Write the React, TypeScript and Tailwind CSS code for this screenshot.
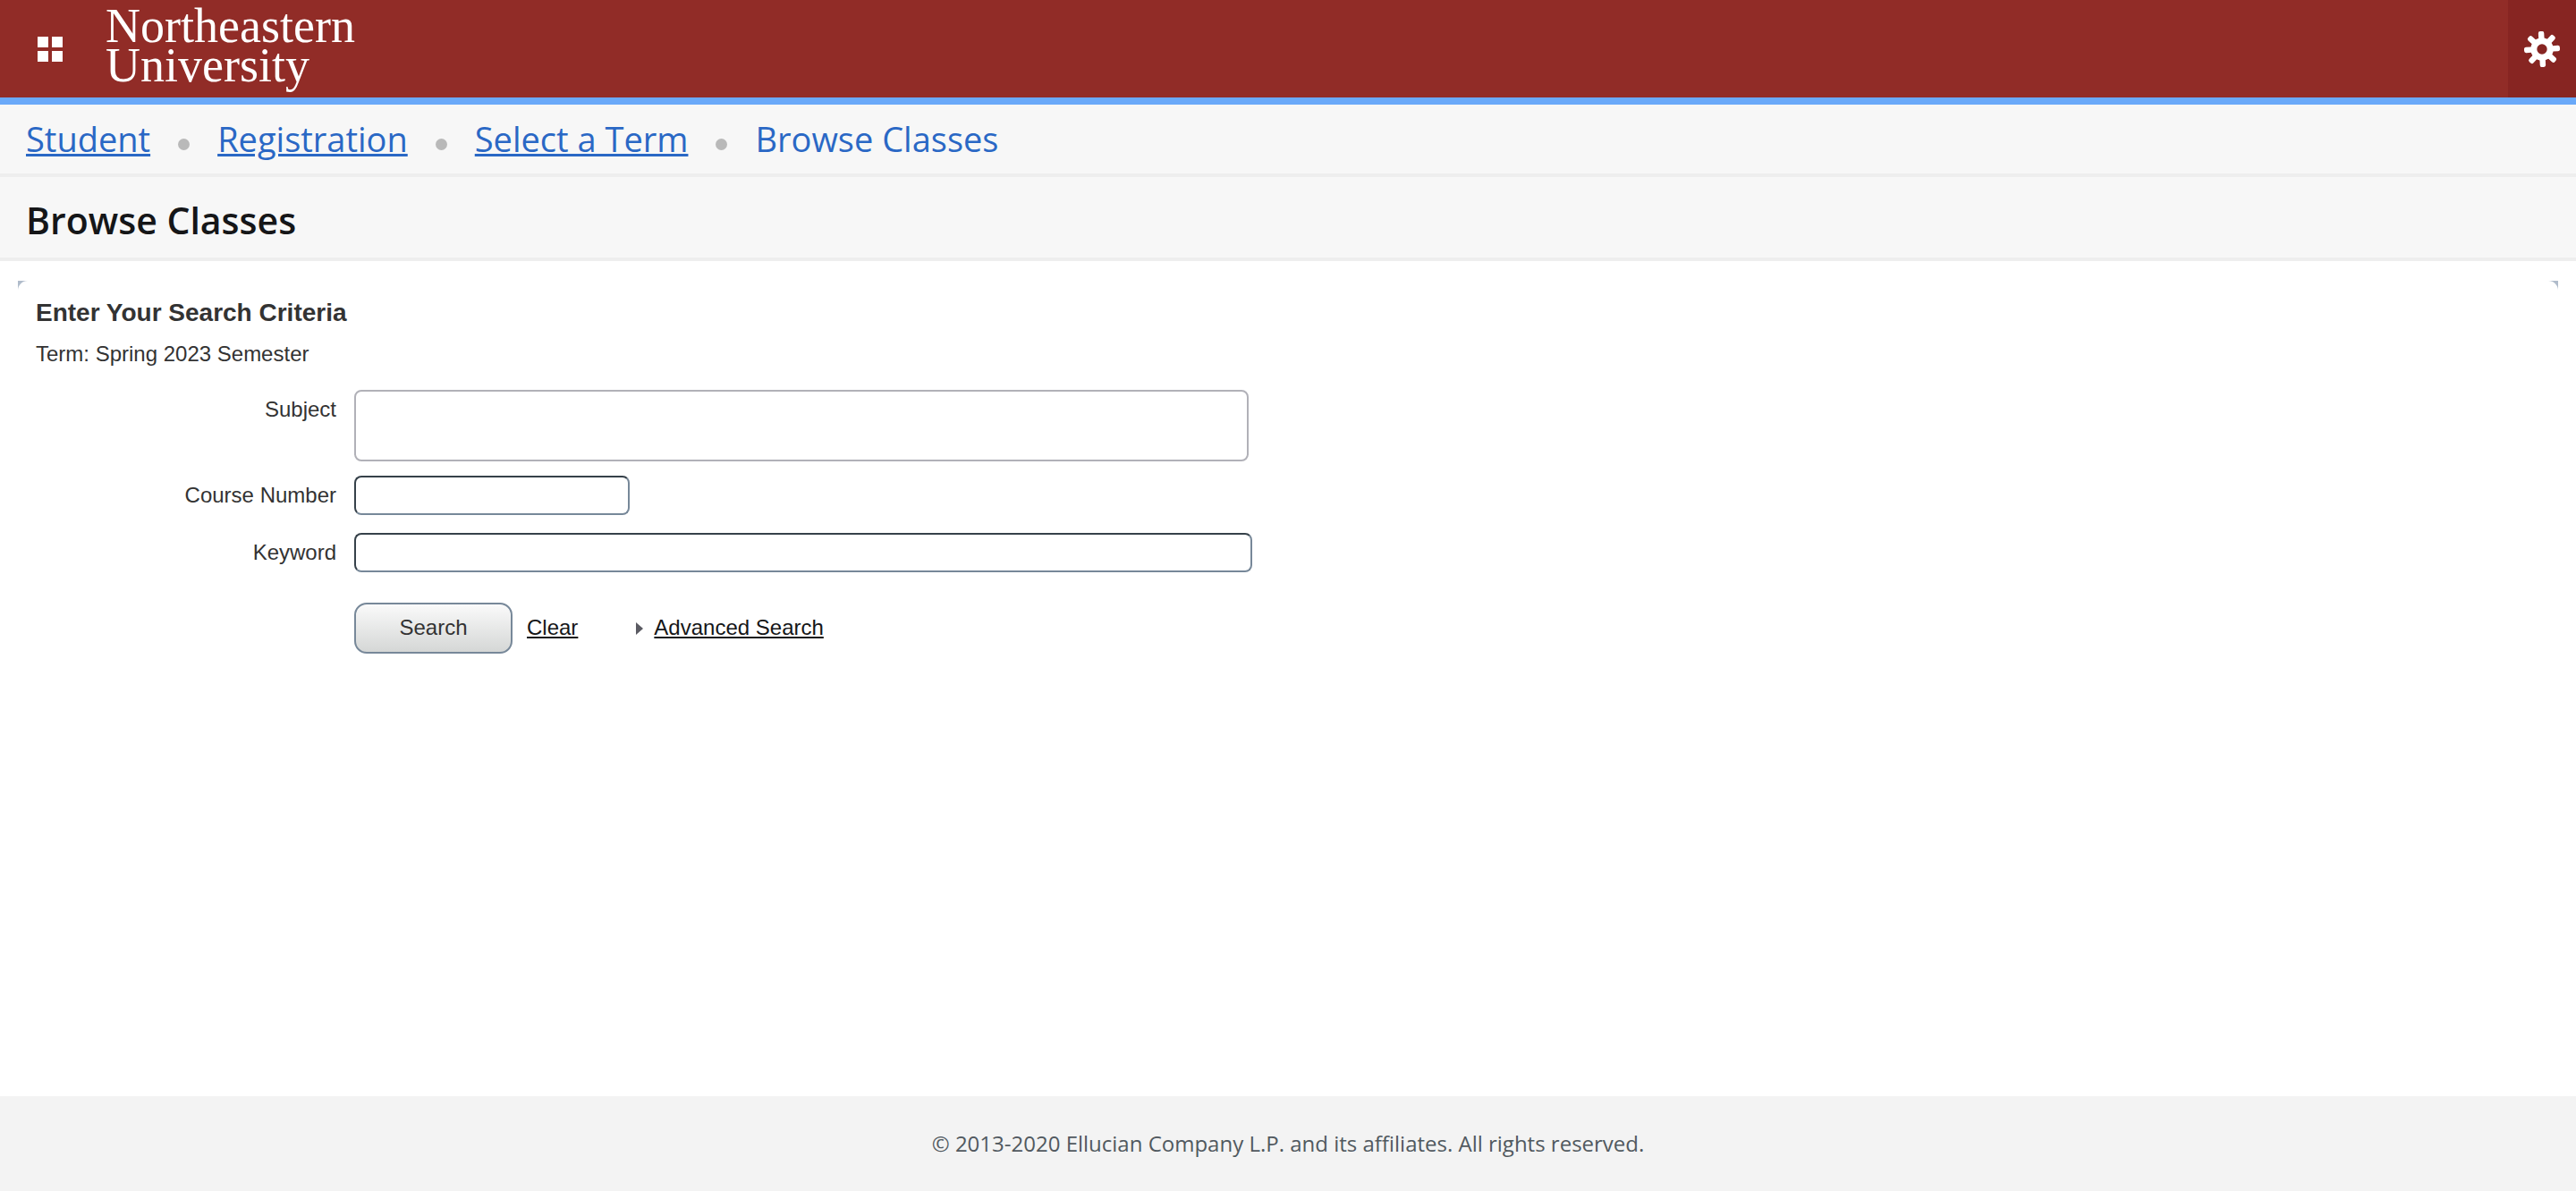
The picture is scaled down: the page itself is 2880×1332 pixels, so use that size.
const crumbs = ["Student", "Registration", "Select a Term"];

const field =
  "h-11 rounded-lg border-2 border-t-[#36414a] border-l-[#36414a] border-r-[#778899] border-b-[#778899] bg-white px-2 text-2xl";

function Gear() {
  return (
    <svg viewBox="-20 -20 40 40" className="size-10" fill="none" aria-hidden="true">
      <circle r="9.2" stroke="white" strokeWidth="7" />
      {[0, 45, 90, 135, 180, 225, 270, 315].map((a) => (
        <rect key={a} x="-3.2" y="-20" width="6.4" height="10" rx="2.2" fill="white" transform={`rotate(${a - 3})`} />
      ))}
    </svg>
  );
}

function Corner({ className }: { className: string }) {
  return (
    <svg viewBox="0 0 11 11" className={className} aria-hidden="true">
      <path d="M0 0H11A11 11 0 0 0 0 11Z" fill="#b0bccb" />
    </svg>
  );
}

export default function App() {
  return (
    <div className="flex min-h-screen flex-col bg-white font-['Liberation_Sans',Arial,sans-serif] text-[#333333]">
      <header className="flex h-[117px] items-stretch justify-between border-b-8 border-[#6aa9f9] bg-[#912c27]">
        <div className="flex items-center">
          <button type="button" aria-label="Menu" className="ml-[42px] grid grid-cols-2 gap-1">
            <span className="size-3 bg-white" />
            <span className="size-3 bg-white" />
            <span className="size-3 bg-white" />
            <span className="size-3 bg-white" />
          </button>
          <a
            href="#"
            className="ml-12 pb-2 font-['Liberation_Serif',serif] text-[54px] leading-[44px] text-white"
          >
            Northeastern
            <br />
            University
          </a>
        </div>
        <button type="button" aria-label="Settings" className="flex w-[76px] items-center justify-center bg-[#872522]">
          <Gear />
        </button>
      </header>

      <nav
        aria-label="Breadcrumb"
        className="flex h-[81px] items-center border-b-4 border-[#eeeeee] bg-[#f7f7f7] px-[29px] pb-0.5 font-['Open_Sans',sans-serif] text-[38px] leading-[52px] text-[#2a68c5]"
      >
        <ol className="flex items-center">
          {crumbs.map((c) => (
            <li key={c} className="flex items-center">
              <a href="#" className="underline decoration-[3px] underline-offset-2">
                {c}
              </a>
              <span className="mx-[31px] mt-3.5 size-[13px] rounded-full bg-[#b9b9b9]" />
            </li>
          ))}
          <li aria-current="page">Browse Classes</li>
        </ol>
      </nav>

      <div className="flex h-[94px] items-center border-b-4 border-[#eeeeee] bg-[#f7f7f7] px-[29px] pt-1.5">
        <h1 className="font-['Open_Sans',sans-serif] text-[41px] leading-[56px] font-semibold text-[#151618]">
          Browse Classes
        </h1>
      </div>

      <main className="relative mx-5 mt-[22px] flex-1 px-5 pt-5">
        <Corner className="absolute top-0 left-0 size-[11px]" />
        <Corner className="absolute top-0 right-0 size-[11px] -scale-x-100" />
        <h2 className="text-[28px] leading-8 font-bold">Enter Your Search Criteria</h2>
        <p className="mt-4 text-2xl leading-7">Term: Spring 2023 Semester</p>

        <form className="mt-[26px] text-2xl leading-7" onSubmit={(e) => e.preventDefault()}>
          <div className="flex items-start gap-5">
            <label htmlFor="subject" className="w-[336px] pt-2 text-right">
              Subject
            </label>
            <textarea
              id="subject"
              className="h-20 w-[1000px] resize-none rounded-lg border-2 border-[#b1b1b8] bg-white p-2"
            />
          </div>
          <div className="mt-4 flex items-center gap-5">
            <label htmlFor="course" className="w-[336px] text-right">
              Course Number
            </label>
            <input id="course" type="text" className={`${field} w-[308px]`} />
          </div>
          <div className="mt-5 flex items-center gap-5">
            <label htmlFor="keyword" className="w-[336px] text-right">
              Keyword
            </label>
            <input id="keyword" type="text" className={`${field} w-[1004px]`} />
          </div>
          <div className="mt-[34px] ml-[356px] flex items-center">
            <button
              type="submit"
              className="h-[57px] w-[177px] rounded-[14px] border-2 border-[#778899] bg-linear-to-b from-[#fafafa] to-[#d5d7d6] pb-0.5"
            >
              Search
            </button>
            <a href="#" className="ml-4 pb-0.5 text-[#151618] underline decoration-2 underline-offset-2">
              Clear
            </a>
            <svg viewBox="0 0 8 14" className="ml-[65px] h-3.5 w-2" aria-hidden="true">
              <path d="M0 0L8 7L0 14Z" fill="#5b5b63" />
            </svg>
            <a href="#" className="ml-3 pb-0.5 text-[#151618] underline decoration-2 underline-offset-2">
              Advanced Search
            </a>
          </div>
        </form>
      </main>

      <footer className="flex h-[106px] items-center justify-center bg-[#f3f3f3] font-['Open_Sans',sans-serif] text-2xl text-[#51595f]">
        © 2013-2020 Ellucian Company L.P. and its affiliates. All rights reserved.
      </footer>
    </div>
  );
}
